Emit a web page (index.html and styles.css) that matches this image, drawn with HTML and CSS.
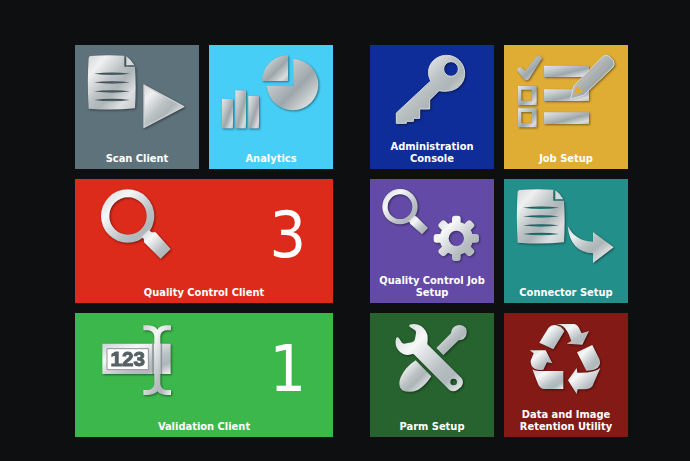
FILE: index.html
```html
<!DOCTYPE html>
<html lang="en">
<head>
<meta charset="utf-8">
<title>Capture Launcher</title>
<link rel="stylesheet" href="styles.css">
</head>
<body>
<svg class="defs" aria-hidden="true">
  <defs>
    <linearGradient id="metal" x1="0" y1="0" x2="1" y2="1">
      <stop offset="0" stop-color="#d2d5d7"/>
      <stop offset=".2" stop-color="#eff0f0"/>
      <stop offset=".45" stop-color="#bdc3c5"/>
      <stop offset=".6" stop-color="#adb5b8"/>
      <stop offset=".8" stop-color="#dddfe0"/>
      <stop offset="1" stop-color="#c5cacc"/>
    </linearGradient>
    <linearGradient id="steel" x1="0" y1="0" x2="1" y2="1">
      <stop offset="0" stop-color="#e4e6e7"/>
      <stop offset=".3" stop-color="#c3c8ca"/>
      <stop offset=".58" stop-color="#9da7ab"/>
      <stop offset=".85" stop-color="#dadddd"/>
      <stop offset="1" stop-color="#b0b7ba"/>
    </linearGradient>
    <linearGradient id="bright" x1="0" y1="0" x2="1" y2="1">
      <stop offset="0" stop-color="#ced2d4"/>
      <stop offset=".3" stop-color="#f6f7f7"/>
      <stop offset=".65" stop-color="#b9c0c3"/>
      <stop offset=".8" stop-color="#afb7ba"/>
      <stop offset="1" stop-color="#f1f2f2"/>
    </linearGradient>
    <symbol id="page" viewBox="15 15 372 270">
      <path fill="url(#metal)" fill-rule="evenodd" d="M60 48Q110 44 163 47V80H195Q199 140 195 205Q125 212 56 206Q51 125 56 53ZM72 101Q126 109 180 101Q126 94 72 101ZM72 127Q126 135 180 127Q126 120 72 127ZM72 154Q126 162 180 154Q126 147 72 154ZM72 180Q126 188 180 180Q126 173 72 180Z"/>
      <path fill="#d5d9da" d="M169 49Q185 60 193 76H169Z"/>
    </symbol>
  </defs>
</svg>
<main class="board">
  <section class="group">
    <a class="tile scan" href="#scan">
      <svg class="icon" viewBox="15 15 372 270" aria-hidden="true">
        <use href="#page" x="15" y="15" width="372" height="270"/>
        <path class="round" d="M222 135L341 200L222 262Z"/>
      </svg>
      <span class="label">Scan Client</span>
    </a>
    <a class="tile analytics" href="#analytics">
      <svg class="icon steel" viewBox="15 15 372 270" aria-hidden="true">
        <path d="M252 45V123H174A79 79 0 0 1 252 45Z"/>
        <path d="M268 57A77 77 0 1 1 189 137H268Z"/>
        <path d="M54 177H87V265H54Z"/><path d="M94 151H126V265H94Z"/><path d="M133 168H165V265H133Z"/>
      </svg>
      <span class="label">Analytics</span>
    </a>
    <a class="tile wide quality" href="#quality">
      <span class="summary">
        <svg class="icon bright" viewBox="15 15 372 270" aria-hidden="true">
          <path fill-rule="evenodd" d="M93 126a80 80 0 1 1 160 0a80 80 0 1 1 -160 0ZM118 126a56 56 0 1 0 112 0a56 56 0 1 0 -112 0Z"/>
          <path d="M216 188L236 168L245 175H257L302 225L272 254L222 205V196Z"/>
        </svg>
        <span class="count">3</span>
      </span>
      <span class="label">Quality Control Client</span>
    </a>
    <a class="tile wide validation" href="#validation">
      <span class="summary">
        <svg class="icon bright" viewBox="15 15 372 270" aria-hidden="true">
          <path d="M97 107H302V198H97Z"/>
          <path class="seam" d="M249 107V198M274 107V198"/>
          <path class="field" d="M111 122H235V185H111Z"/>
          <text class="digits" x="173" y="174">123</text>
          <path d="M220 52H235Q255 53 262 65Q270 53 288 52H303V67H288Q272 70 271 85V229Q273 243 288 246H303V261H288Q270 260 262 250Q254 260 235 261H220V246H235Q251 243 253 229V85Q251 70 235 67H220Z"/>
        </svg>
        <span class="count">1</span>
      </span>
      <span class="label">Validation Client</span>
    </a>
  </section>
  <section class="group">
    <a class="tile admin" href="#admin">
      <svg class="icon" viewBox="15 15 372 270" aria-hidden="true">
        <path class="edge" fill-rule="evenodd" d="M197 123C177 82 207 46 245 46C275 46 299 70 299 100C299 132 273 161 222 152L194 180V207H164V235H145V244H124V250H94V219ZM236 87a22 22 0 1 0 44 0a22 22 0 1 0 -44 0Z"/>
      </svg>
      <span class="label">Administration Console</span>
    </a>
    <a class="tile job" href="#job">
      <svg class="icon steel" viewBox="15 15 372 270" aria-hidden="true">
        <path d="M54 91Q55 82 65 82L79 92L112 50Q121 44 130 54L90 117Q83 124 75 118Z"/>
        <path fill-rule="evenodd" d="M57 138H113V195H57ZM67 149V182H99V149Z"/>
        <path fill-rule="evenodd" d="M57 205H113V262H57ZM67 216V250H99V216Z"/>
        <path d="M135 77H270V111H135Z"/><path d="M135 148H270V183H135Z"/><path d="M135 217H270V252H135Z"/>
        <path class="edge" d="M215 177L224 138L311 50Q319 41 331 49L343 62Q349 73 342 81L255 165Z"/>
        <path class="groove" d="M235 133L302 66M244 143L318 70M254 151L327 78"/>
        <path class="gap" d="M225 164L231 142L239 139L241 149L250 150L249 158Z"/>
      </svg>
      <span class="label">Job Setup</span>
    </a>
    <a class="tile quality-setup" href="#quality-setup">
      <svg class="icon bright" viewBox="15 15 372 270" aria-hidden="true">
        <mask id="gear">
          <g fill="#fff">
            <circle cx="274" cy="193" r="50"/>
            <rect x="261" y="125" width="26" height="136" rx="9"/>
            <rect x="261" y="125" width="26" height="136" rx="9" transform="rotate(45 274 193)"/>
            <rect x="261" y="125" width="26" height="136" rx="9" transform="rotate(90 274 193)"/>
            <rect x="261" y="125" width="26" height="136" rx="9" transform="rotate(135 274 193)"/>
          </g>
          <circle cx="274" cy="193" r="23" fill="#000"/>
        </mask>
        <path fill-rule="evenodd" d="M52 98a53 53 0 1 1 106 0a53 53 0 1 1 -106 0ZM68 98a37 37 0 1 0 74 0a37 37 0 1 0 -74 0Z"/>
        <path d="M132 142L149 125L155 128L189 162L171 181L136 150Z"/>
        <path mask="url(#gear)" d="M204 123H344V263H204Z"/>
      </svg>
      <span class="label">Quality Control Job Setup</span>
    </a>
    <a class="tile connector" href="#connector">
      <svg class="icon" viewBox="15 15 372 270" aria-hidden="true">
        <use href="#page" x="15" y="15" width="372" height="270"/>
        <path d="M206 155Q228 201 282 203V174L344 220L282 267V238Q213 234 206 155Z"/>
      </svg>
      <span class="label">Connector Setup</span>
    </a>
    <a class="tile parm" href="#parm">
      <svg class="icon" viewBox="15 15 372 270" aria-hidden="true">
        <path d="M152 157L199 205Q180 234 160 245Q133 257 112 247Q97 234 107 208Q120 178 152 157Z"/>
        <path d="M214 120L258 76Q259 60 273 53Q291 47 303 60Q310 80 296 93Q288 97 281 97L235 142Z"/>
        <path class="bright-fill" fill-rule="evenodd" d="M134 50Q151 44 168 54Q190 69 188 95L187 109L290 211Q298 223 289 236L276 247Q264 253 253 246L151 143Q146 136 140 139Q118 145 102 129Q88 113 93 92Q97 84 102 91L111 104Q116 109 125 106L141 103Q149 101 150 92L153 76Q154 69 149 66L136 58Q130 54 134 50ZM256 222a10 10 0 1 0 20 0a10 10 0 1 0 -20 0Z"/>
      </svg>
      <span class="label">Parm Setup</span>
    </a>
    <a class="tile retention" href="#retention">
      <svg class="icon bright" viewBox="15 15 372 270" aria-hidden="true">
        <path d="M121 104L148 60Q157 49 172 52Q190 57 196 70L163 124Z"/>
        <path d="M172 48H225Q237 50 243 66L248 76L270 69L250 110L203 107L217 99Q205 62 190 54Q182 49 172 48Z"/>
        <path d="M234 133L280 111L301 153Q307 169 296 179Q285 188 262 188Z"/>
        <path d="M304 180L280 235Q273 244 256 244H236L233 258L207 217L233 180L235 194Q285 196 304 180Z"/>
        <path d="M100 184Q108 189 120 189H193V243H135Q124 242 118 230Z"/>
        <path d="M92 127H140L160 166L144 163L133 185Q119 187 108 183Q94 175 95 158L104 136Z"/>
      </svg>
      <span class="label">Data and Image Retention Utility</span>
    </a>
  </section>
</main>
</body>
</html>
```
FILE: styles.css
```css
* { box-sizing: border-box; }

body {
  margin: 0;
  background: #0d0f10;
  color: #fff;
  font-family: "DejaVu Sans Condensed", "DejaVu Sans", sans-serif;
}

.defs { position: absolute; width: 0; height: 0; }

.board {
  display: grid;
  grid-template-columns: 1fr 1fr;
  gap: 37px;
  padding: 45px 62px 24px 75px;
}

.group {
  display: grid;
  grid-template-columns: 1fr 1fr;
  gap: 10px;
}

.tile {
  display: flex;
  flex-direction: column;
  align-items: center;
  justify-content: space-between;
  min-height: 124px;
  padding-bottom: 4px;
  color: inherit;
  text-decoration: none;
}

.wide { grid-column: span 2; }

.summary {
  display: flex;
  align-items: center;
  justify-content: space-between;
  width: 100%;
  height: 90px;
  padding-right: 27px;
}

.count {
  padding-top: 22px;
  font-size: 64px;
  line-height: 64px;
}

.label {
  padding: 0 4px;
  font-size: 11px;
  font-weight: bold;
  line-height: 12px;
  text-align: center;
}

.scan { background: #5e727b; }
.analytics { background: #46cef7; }
.quality { background: #dc2a1b; }
.validation { background: #3cb74b; }
.admin { background: #0e2d98; }
.job { background: #e0ad34; }
.quality-setup { background: #634aa6; }
.connector { background: #238f8b; }
.parm { background: #26632f; }
.retention { background: #841a15; }

.icon {
  display: block;
  width: 124px;
  height: 90px;
  fill: url(#metal);
  filter: drop-shadow(1px 1px 1px rgba(0, 0, 0, 0.45));
}

.steel { fill: url(#steel); }
.bright, .bright-fill { fill: url(#bright); }
.round { stroke: #cdd1d3; stroke-width: 4; stroke-linejoin: round; }
.edge { stroke: #d5dadc; stroke-width: 3; }
.seam { fill: none; stroke: #8c979b; stroke-width: 5; }
.field { fill: #fff; stroke: #8b9599; stroke-width: 3; }
.groove { fill: none; stroke: #c4ad72; stroke-width: 3; }
.gap { fill: #e0ad34; }

.digits {
  fill: #566165;
  stroke: #566165;
  stroke-width: 3;
  font-family: "Liberation Sans", Arial, sans-serif;
  font-size: 62px;
  font-weight: bold;
  text-anchor: middle;
}
```
